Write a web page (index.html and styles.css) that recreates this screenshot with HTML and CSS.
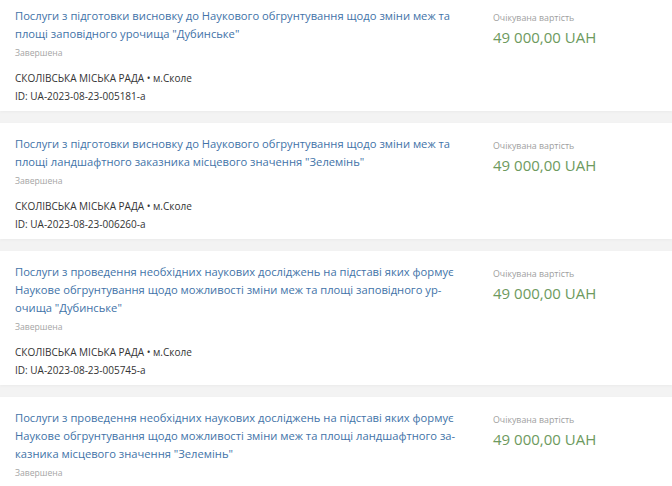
FILE: index.html
```html
<!DOCTYPE html>
<html lang="uk">
<head>
<meta charset="utf-8">
<link rel="stylesheet" href="styles.css">
</head>
<body>
<div class="list">
  <div class="card first">
    <div class="main">
      <a class="title">Послуги з підготовки висновку до Наукового обгрунтування щодо зміни меж та площі заповідного урочища "Дубинське"</a>
      <div class="status">Завершена</div>
      <div class="org">СКОЛІВСЬКА МІСЬКА РАДА • м.Сколе</div>
      <div class="id">ID: UA-2023-08-23-005181-a</div>
    </div>
    <div class="side">
      <div class="label">Очікувана вартість</div>
      <div class="price">49 000,00 UAH</div>
    </div>
  </div>
  <div class="card">
    <div class="main">
      <a class="title">Послуги з підготовки висновку до Наукового обгрунтування щодо зміни меж та площі ландшафтного заказника місцевого значення "Зелемінь"</a>
      <div class="status">Завершена</div>
      <div class="org">СКОЛІВСЬКА МІСЬКА РАДА • м.Сколе</div>
      <div class="id">ID: UA-2023-08-23-006260-a</div>
    </div>
    <div class="side">
      <div class="label">Очікувана вартість</div>
      <div class="price">49 000,00 UAH</div>
    </div>
  </div>
  <div class="card">
    <div class="main">
      <a class="title">Послуги з проведення необхідних наукових досліджень на підставі яких формує Наукове обгрунтування щодо можливості зміни меж та площі заповідного ур-<br>очища "Дубинське"</a>
      <div class="status">Завершена</div>
      <div class="org">СКОЛІВСЬКА МІСЬКА РАДА • м.Сколе</div>
      <div class="id">ID: UA-2023-08-23-005745-a</div>
    </div>
    <div class="side">
      <div class="label">Очікувана вартість</div>
      <div class="price">49 000,00 UAH</div>
    </div>
  </div>
  <div class="card">
    <div class="main">
      <a class="title">Послуги з проведення необхідних наукових досліджень на підставі яких формує Наукове обгрунтування щодо можливості зміни меж та площі ландшафтного за-<br>казника місцевого значення "Зелемінь"</a>
      <div class="status">Завершена</div>
    </div>
    <div class="side">
      <div class="label">Очікувана вартість</div>
      <div class="price">49 000,00 UAH</div>
    </div>
  </div>
</div>
</body>
</html>
```
FILE: styles.css
```css
html, body {
  margin: 0;
  padding: 0;
  background: #f3f3f3;
  font-family: "Open Sans", "Noto Sans", sans-serif;
  overflow: hidden;
}
.list {
  display: flex;
  flex-direction: column;
  gap: 12px;
  margin-top: -5px;
}
.card {
  background: #fff;
  display: flex;
  padding: 12px 15px 6px 15px;
  box-shadow: 0 1px 3px rgba(0,0,0,0.04);
}
.main {
  width: 450px;
  flex: none;
}
.side {
  margin-left: 28px;
  padding-top: 4px;
}
.title {
  display: block;
  color: #4273a8;
  font-size: 11.2px;
  line-height: 18px;
  text-decoration: none;
}
.status {
  color: #a5a5a5;
  font-size: 8.6px;
  line-height: 14px;
  margin-top: 3px;
}
.org, .id {
  color: #333;
  font-size: 10px;
  line-height: 18px;
}
.org {
  margin-top: 9px;
}
.label {
  color: #a0a0a0;
  font-size: 8.8px;
  line-height: 14px;
}
.price {
  color: #6d9a5e;
  font-size: 15px;
  line-height: 24px;
  margin-top: 0;
}
```
